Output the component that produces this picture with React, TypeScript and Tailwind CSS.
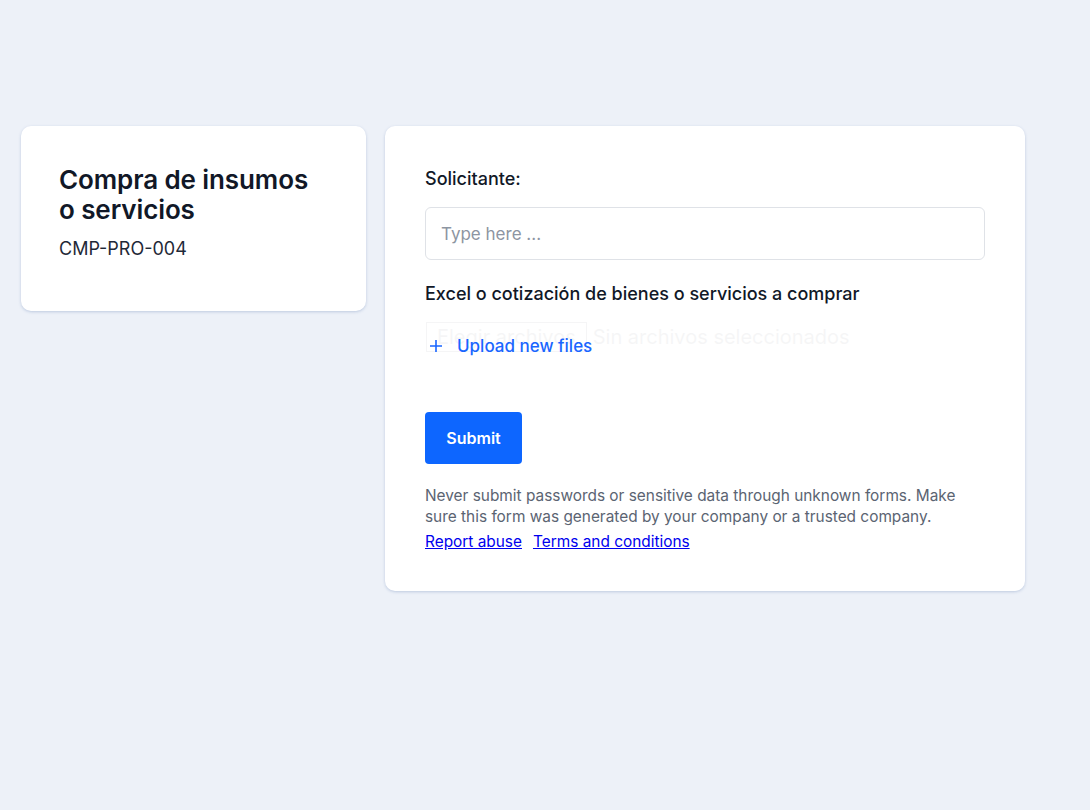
import React from 'react';

function App() {
  return (
    <div className="min-h-screen bg-[#edf1f8] pl-[21px] pt-[126px] font-['Inter','Liberation_Sans',sans-serif] text-[#111827]">
      <div className="flex items-start gap-[19px]">
        <div className="w-[345px] h-[185px] bg-white rounded-[10px] shadow-[0_1px_3px_rgba(100,130,180,0.35)] px-[38px] pt-[39px]">
          <h1 className="text-[26px] leading-[30px] font-semibold tracking-[-0.1px]">Compra de insumos o servicios</h1>
          <p className="mt-[12px] text-[18px] leading-[24px] text-[#1f2937]">CMP-PRO-004</p>
        </div>

        <div className="w-[640px] bg-white rounded-[10px] shadow-[0_1px_3px_rgba(100,130,180,0.35)] px-[40px] pt-[42px] pb-[39px]">
          <label className="block text-[18px] leading-[22px] font-medium">Solicitante:</label>
          <input
            type="text"
            placeholder="Type here ..."
            className="mt-[17px] block w-[560px] h-[53px] rounded-[6px] border border-[#dfe2e7] px-[15px] text-[17px] placeholder:text-[#8d95a2] outline-none"
          />

          <label className="block mt-[22px] text-[18px] leading-[24px] font-medium">Excel o cotización de bienes o servicios a comprar</label>
          <div className="relative mt-[20px] h-[42px]">
            <div className="absolute left-[1px] top-[-4px] flex items-center opacity-[0.035] text-[20px] leading-[26px] text-[#111827]">
              <span className="border border-[#111827] px-[10px] py-[1px]">Elegir archivos</span>
              <span className="ml-[6px]">Sin archivos seleccionados</span>
            </div>
            <button className="absolute left-[4px] top-[9px] flex items-center gap-[14px] text-[17px] leading-[22px] font-medium text-[#1a66ff]">
              <svg width="14" height="14" viewBox="0 0 14 14" fill="none" stroke="currentColor" strokeWidth="1.6">
                <path d="M7 1v12M1 7h12" />
              </svg>
              Upload new files
            </button>
          </div>

          <button className="mt-[44px] block w-[97px] h-[52px] rounded-[4px] bg-[#0d66ff] text-white text-[16px] font-semibold">
            Submit
          </button>

          <p className="mt-[21px] text-[15.4px] leading-[21px] text-[#5b6472] w-[560px]">
            Never submit passwords or sensitive data through unknown forms. Make sure this form was generated by your company or a trusted company.
          </p>
          <div className="mt-[4px] flex gap-[11px] text-[15.4px] leading-[21px]">
            <a href="#" className="text-[#0000ee] underline">Report abuse</a>
            <a href="#" className="text-[#0000ee] underline">Terms and conditions</a>
          </div>
        </div>
      </div>
    </div>
  );
}

export default App;
